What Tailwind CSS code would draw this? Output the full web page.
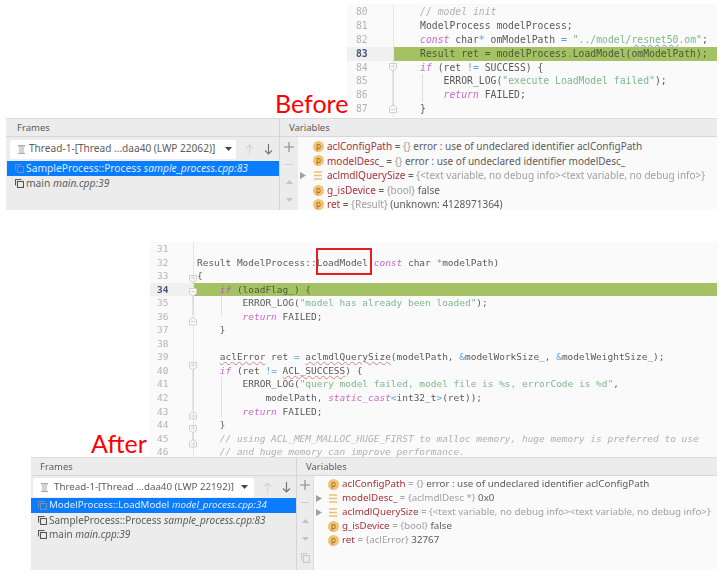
<!doctype html>
<html>
<head>
  <meta charset="UTF-8">
  <script src="https://cdn.jsdelivr.net/npm/@tailwindcss/browser@4"></script>
</head>
<body class="bg-white">
<main class="relative w-[724px] h-[577px] overflow-hidden bg-white">

  <!-- top code shot -->
  <section class="absolute left-[347px] top-[4px] w-[370px] h-[113px] bg-[#fafafa] blur-[0.45px] font-['DejaVu_Sans_Mono',monospace] [font-variant-ligatures:none] text-[9.75px] leading-[13.9px] text-[#5a5a5a]">
    <div class="absolute left-[46px] top-0 bottom-0 w-px bg-[#e6e6e6]"></div>
    <div class="absolute left-[75px] top-[70px] h-[28px] w-px bg-[#dedede]"></div>
    <div class="pt-[1px]">
      <div class="flex h-[13.9px]"><span class="w-[46px] pl-[9px] text-[#b4b4b4]">80</span><span class="whitespace-pre pl-[3.6px] italic text-[#b0b0b0]">    // model init</span></div>
      <div class="flex h-[13.9px]"><span class="w-[46px] pl-[9px] text-[#b4b4b4]">81</span><span class="whitespace-pre pl-[3.6px]">    ModelProcess modelProcess;</span></div>
      <div class="flex h-[13.9px]"><span class="w-[46px] pl-[9px] text-[#b4b4b4]">82</span><span class="whitespace-pre pl-[3.6px]">    <span class="italic text-[#c66bc9]">const</span> char<span class="text-[#5aa5e0]">*</span> omModelPath <span class="text-[#5aa5e0]">=</span> <span class="text-[#7fb88a]">"../model/<span class="underline decoration-wavy decoration-[#6f8fe0] decoration-1 underline-offset-[1px]">resnet50</span>.om"</span>;</span></div>
      <div class="flex h-[13.9px]"><span class="w-[46px] pl-[9px] bg-[#f0f0f0] font-bold text-[#44527c]">83</span><span class="flex-1 whitespace-pre pl-[3.6px] bg-[#a4c263] text-[#4f5a3a]">    Result ret = modelProcess<span class="text-[#3f8fc4]">.</span>LoadModel(omModelPath);</span></div>
      <div class="flex h-[13.9px]"><span class="w-[46px] pl-[9px] text-[#b4b4b4]">84</span><span class="whitespace-pre pl-[3.6px]">    <span class="italic text-[#c66bc9]">if</span> (ret <span class="text-[#5aa5e0]">!=</span> SUCCESS) {</span></div>
      <div class="flex h-[13.9px]"><span class="w-[46px] pl-[9px] text-[#b4b4b4]">85</span><span class="whitespace-pre pl-[3.6px]">        ERROR_LOG(<span class="text-[#7fb88a]">"execute LoadModel failed"</span>);</span></div>
      <div class="flex h-[13.9px]"><span class="w-[46px] pl-[9px] text-[#b4b4b4]">86</span><span class="whitespace-pre pl-[3.6px]">        <span class="italic text-[#c66bc9]">return</span> FAILED;</span></div>
      <div class="flex h-[13.9px]"><span class="w-[46px] pl-[9px] text-[#b4b4b4]">87</span><span class="whitespace-pre pl-[3.6px]">    }</span></div>
    </div>
    <svg class="absolute left-[42px] top-[59px]" width="8" height="50" viewBox="0 0 8 50" fill="none" stroke="#cfcfcf">
      <path d="M.5.5h7v5l-3.500 2.500-3.500-2.500zM2 3h4"/>
      <path d="M4 8v34"/>
      <path d="M.5 49.500h7v-5l-3.500-2.500-3.500 2.500zM2 46.500h4" fill="#fafafa"/>
    </svg>
  </section>

  <p class="absolute left-[275px] top-[87px] font-['Lato',sans-serif] text-[25px] leading-[32px] text-[#ff0000]">Before</p>

  <!-- before debug panel -->
  <section class="absolute left-[6px] top-[118px] w-[711px] h-[92px] flex bg-[#ececec] blur-[0.45px] font-['Noto_Sans',sans-serif] text-[10px] text-[#5c5c5c] border-t border-[#dcdcdc]">
    <div class="w-[274px] shrink-0 border-r border-[#d4d4d4]">
      <div class="h-[18px] pl-[11px] leading-[17px] text-[9.5px] border-b border-[#d8d8d8]">Frames</div>
      <div class="flex items-center h-[24px] pl-[4px]">
        <div class="w-[226px] h-[19px] flex items-center bg-white rounded-[2px] pl-[7px] pr-[4px] text-[10.1px]">
          <svg width="9" height="9" viewBox="0 0 9 9" fill="#a8a8a8"><path d="M1 0h7v1.500H1zM2 2.500h5v1H2zM2 4.500h5v1H2zM2 6.500h5v1H2zM1 8h7v1H1z"/></svg>
          <span class="ml-[3px] flex-1 whitespace-nowrap">Thread-1-[Thread ...daa40 (LWP 22062)]</span>
          <svg width="7" height="4" viewBox="0 0 7 4"><path d="M0 0h7L3.500 4z" fill="#444"/></svg>
        </div>
        <svg class="ml-[9px]" width="9" height="11" viewBox="0 0 9 11" fill="none" stroke="#d4d4d4" stroke-width="1.200"><path d="M4.500 11V1M1 4.500l3.500-3.500 3.500 3.500"/></svg>
        <svg class="ml-[10px]" width="9" height="11" viewBox="0 0 9 11" fill="none" stroke="#777" stroke-width="1.200"><path d="M4.500 0v10M1 6.500l3.500 3.500 3.500-3.500"/></svg>
      </div>
      <div class="flex items-center h-[15px] pl-[8px] ml-[1px] bg-[#0a7cff] text-[#dcebff] text-[10.25px] whitespace-nowrap">
        <svg width="9" height="9" viewBox="0 0 9 9" fill="none" stroke="#6f8fb8" stroke-width="1.100"><path d="M.5 6.500V.5h6"/><rect x="2.500" y="2.500" width="6" height="6"/></svg>
        <span class="ml-[2px]">SampleProcess::Process <i>sample_process.cpp:83</i></span>
      </div>
      <div class="flex items-center h-[15px] pl-[8px] ml-[1px] text-[10.25px] whitespace-nowrap">
        <svg width="9" height="9" viewBox="0 0 9 9" fill="none" stroke="#555" stroke-width="1.100"><path d="M.5 6.500V.5h6"/><rect x="2.500" y="2.500" width="6" height="6"/></svg>
        <span class="ml-[2px]">main <i>main.cpp:39</i></span>
      </div>
    </div>
    <div class="flex-1 min-w-0">
      <div class="h-[18px] pl-[9px] leading-[17px] text-[9.5px] border-b border-[#d8d8d8]">Variables</div>
      <div class="flex h-[73px]">
        <div class="w-[18px] shrink-0 flex flex-col items-center">
          <svg class="mt-[5px]" width="10" height="10" viewBox="0 0 10 10" stroke="#8a8a8a" stroke-width="1.100"><path d="M5 0v10M0 5h10"/></svg>
          <svg class="mt-[12px]" width="8" height="1" viewBox="0 0 8 1" stroke="#cfcfcf"><path d="M0 .5h8"/></svg>
          <svg class="mt-[15px]" width="7" height="4" viewBox="0 0 7 4"><path d="M0 4h7L3.500 0z" fill="#c4c4c4"/></svg>
          <svg class="mt-[14px]" width="7" height="4" viewBox="0 0 7 4"><path d="M0 0h7L3.500 4z" fill="#c4c4c4"/></svg>
        </div>
        <div class="flex-1 bg-[#fafafa] text-[10px] leading-[14.6px] whitespace-nowrap">
          <div class="flex items-center h-[14.6px] pl-[15px] mt-[2px]"><span class="w-[11px] h-[11px] mr-[3px] rounded-full bg-[#f5c271] text-[8px] leading-[10px] text-center text-[#8a6a30]">p</span><span class="text-[#a5343a]">aclConfigPath</span><span class="whitespace-pre"> = <span class="text-[#a0a0a0]">{}</span> error : use of undeclared identifier aclConfigPath</span></div>
          <div class="flex items-center h-[14.6px] pl-[15px]"><span class="w-[11px] h-[11px] mr-[3px] rounded-full bg-[#f5c271] text-[8px] leading-[10px] text-center text-[#8a6a30]">p</span><span class="text-[#a5343a]">modelDesc_</span><span class="whitespace-pre"> = <span class="text-[#a0a0a0]">{}</span> error : use of undeclared identifier modelDesc_</span></div>
          <div class="flex items-center h-[14.6px] pl-[2px]">
            <svg class="mr-[7px]" width="6" height="7" viewBox="0 0 6 7"><path d="M0 0v7l6-3.500z" fill="#a0a0a0"/></svg>
            <svg class="mr-[4px]" width="10" height="9" viewBox="0 0 10 9" stroke="#f0c070" stroke-width="1.300"><path d="M1 1h8M1 4.500h8M1 8h8"/></svg>
            <span class="text-[#a5343a]">aclmdlQuerySize</span><span class="whitespace-pre"> = <span class="text-[#a0a0a0]">{&lt;text variable, no debug info&gt;&lt;text variable, no debug info&gt;}</span></span>
          </div>
          <div class="flex items-center h-[14.6px] pl-[15px]"><span class="w-[11px] h-[11px] mr-[3px] rounded-full bg-[#f5c271] text-[8px] leading-[10px] text-center text-[#8a6a30]">p</span><span class="text-[#a5343a]">g_isDevice</span><span class="whitespace-pre"> = <span class="text-[#a0a0a0]">{bool}</span> false</span></div>
          <div class="flex items-center h-[14.6px] pl-[15px]"><span class="w-[11px] h-[11px] mr-[3px] rounded-full bg-[#f5c271] text-[8px] leading-[10px] text-center text-[#8a6a30]">p</span><span class="text-[#a5343a]">ret</span><span class="whitespace-pre"> = <span class="text-[#a0a0a0]">{Result}</span> (unknown: 4128971364)</span></div>
        </div>
      </div>
    </div>
  </section>

  <!-- bottom code shot -->
  <section class="absolute left-[150px] top-[242px] w-[567px] h-[215px] bg-[#fafafa] blur-[0.45px] font-['DejaVu_Sans_Mono',monospace] text-[9.47px] leading-[13.55px] text-[#5a5a5a]">
    <div class="absolute left-[43px] top-0 bottom-0 w-px bg-[#e6e6e6]"></div>
    <div class="absolute left-[71px] top-[54px] h-[20px] w-px bg-[#e2e2e2]"></div>
    <div class="absolute left-[71px] top-[135px] h-[40px] w-px bg-[#e2e2e2]"></div>
    <div>
      <div class="flex h-[13.55px]"><span class="w-[43px] pl-[7px] text-[#b4b4b4]">31</span></div>
      <div class="flex h-[13.55px]"><span class="w-[43px] pl-[7px] text-[#b4b4b4]">32</span><span class="whitespace-pre pl-[4px]">Result ModelProcess::LoadModel(<span class="italic text-[#c66bc9]">const</span> char <span class="text-[#5aa5e0]">*</span>modelPath)</span></div>
      <div class="flex h-[13.55px]"><span class="w-[43px] pl-[7px] text-[#b4b4b4]">33</span><span class="whitespace-pre pl-[4px]">{</span></div>
      <div class="flex h-[13.55px]"><span class="w-[43px] pl-[7px] bg-[#f0f0f0] font-bold text-[#44527c]">34</span><span class="flex-1 whitespace-pre pl-[4px] bg-[#a4c263] text-[#4f5a3a]">    <span class="italic text-[#a95fb0]">if</span> (loadFlag_) {</span></div>
      <div class="flex h-[13.55px]"><span class="w-[43px] pl-[7px] text-[#b4b4b4]">35</span><span class="whitespace-pre pl-[4px]">        ERROR_LOG(<span class="text-[#7fb88a]">"model has already been loaded"</span>);</span></div>
      <div class="flex h-[13.55px]"><span class="w-[43px] pl-[7px] text-[#b4b4b4]">36</span><span class="whitespace-pre pl-[4px]">        <span class="italic text-[#c66bc9]">return</span> FAILED;</span></div>
      <div class="flex h-[13.55px]"><span class="w-[43px] pl-[7px] text-[#b4b4b4]">37</span><span class="whitespace-pre pl-[4px]">    }</span></div>
      <div class="flex h-[13.55px]"><span class="w-[43px] pl-[7px] text-[#b4b4b4]">38</span></div>
      <div class="flex h-[13.55px]"><span class="w-[43px] pl-[7px] text-[#b4b4b4]">39</span><span class="whitespace-pre pl-[4px]">    <span class="underline decoration-wavy decoration-[#e08080] decoration-1 underline-offset-[1px]">aclError</span> ret <span class="text-[#5aa5e0]">=</span> <span class="underline decoration-wavy decoration-[#e08080] decoration-1 underline-offset-[1px]">aclmdlQuerySize</span>(modelPath, <span class="text-[#5aa5e0]">&amp;</span>modelWorkSize_, <span class="text-[#5aa5e0]">&amp;</span>modelWeightSize_);</span></div>
      <div class="flex h-[13.55px]"><span class="w-[43px] pl-[7px] text-[#b4b4b4]">40</span><span class="whitespace-pre pl-[4px]">    <span class="italic text-[#c66bc9]">if</span> (ret <span class="text-[#5aa5e0]">!=</span> <span class="underline decoration-wavy decoration-[#e08080] decoration-1 underline-offset-[1px]">ACL_SUCCESS</span>) {</span></div>
      <div class="flex h-[13.55px]"><span class="w-[43px] pl-[7px] text-[#b4b4b4]">41</span><span class="whitespace-pre pl-[4px]">        ERROR_LOG(<span class="text-[#7fb88a]">"query model failed, model file is %s, errorCode is %d"</span>,</span></div>
      <div class="flex h-[13.55px]"><span class="w-[43px] pl-[7px] text-[#b4b4b4]">42</span><span class="whitespace-pre pl-[4px]">            modelPath, <span class="italic text-[#c66bc9]">static_cast</span><span class="text-[#5aa5e0]">&lt;</span>int32_t<span class="text-[#5aa5e0]">&gt;</span>(ret));</span></div>
      <div class="flex h-[13.55px]"><span class="w-[43px] pl-[7px] text-[#b4b4b4]">43</span><span class="whitespace-pre pl-[4px]">        <span class="italic text-[#c66bc9]">return</span> FAILED;</span></div>
      <div class="flex h-[13.55px]"><span class="w-[43px] pl-[7px] text-[#b4b4b4]">44</span><span class="whitespace-pre pl-[4px]">    }</span></div>
      <div class="flex h-[13.55px]"><span class="w-[43px] pl-[7px] text-[#b4b4b4]">45</span><span class="whitespace-pre pl-[4px] italic text-[#b0b0b0]">    // using ACL_MEM_MALLOC_HUGE_FIRST to malloc memory, huge memory is preferred to use</span></div>
      <div class="flex h-[13.55px]"><span class="w-[43px] pl-[7px] text-[#b4b4b4]">46</span><span class="whitespace-pre pl-[4px] italic text-[#b0b0b0]">    // and huge memory can improve performance.</span></div>
    </div>
    <svg class="absolute left-[39px] top-[33px]" width="8" height="180" viewBox="0 0 8 180" fill="none" stroke="#cfcfcf">
      <path d="M.5.500h7v5l-3.500 2.500-3.500-2.500zM2 3h4"/>
      <path d="M.5 13.500h7v5l-3.500 2.500-3.500-2.500zM2 16.500h4" fill="#fafafa"/>
      <path d="M4 21v19"/>
      <path d="M.5 50h7v-5l-3.500-2.500-3.500 2.500zM2 46.500h4" fill="#fafafa"/>
      <path d="M.5 87.500h7v5l-3.500 2.500-3.500-2.500zM2 90h4"/>
      <path d="M4 95v40"/>
      <path d="M.5 144h7v-5l-3.500-2.500-3.500 2.500zM2 141h4"/>
      <path d="M.5 150.500h7v5l-3.500 2.500-3.500-2.500zM2 153h4"/>
      <path d="M4 158v7"/>
      <path d="M.5 172h7v-5l-3.500-2.500-3.500 2.500zM2 169h4"/>
    </svg>
  </section>

  <!-- overlay on the code -->
  <div class="absolute left-[316px] top-[248px] w-[56px] h-[27px] border-2 border-[#e3201f]"></div>

  <p class="absolute left-[91px] top-[427px] font-['Lato',sans-serif] text-[25px] leading-[32px] text-[#ff0000]">After</p>

  <!-- after debug panel -->
  <section class="absolute left-[31px] top-[457px] w-[686px] h-[113px] flex bg-[#ececec] blur-[0.45px] font-['Noto_Sans',sans-serif] text-[10px] text-[#5c5c5c] border-t border-[#dcdcdc]">
    <div class="w-[266px] shrink-0 border-r border-[#d4d4d4]">
      <div class="h-[18px] pl-[9px] leading-[17px] text-[9.5px] border-b border-[#d8d8d8]">Frames</div>
      <div class="flex items-center h-[22px] pl-[2px]">
        <div class="w-[221px] h-[19px] flex items-center bg-white rounded-[2px] pl-[7px] pr-[6px] text-[9.75px]">
          <svg width="9" height="9" viewBox="0 0 9 9" fill="#a8a8a8"><path d="M1 0h7v1.500H1zM2 2.500h5v1H2zM2 4.500h5v1H2zM2 6.500h5v1H2zM1 8h7v1H1z"/></svg>
          <span class="ml-[5px] flex-1 whitespace-nowrap">Thread-1-[Thread ...daa40 (LWP 22192)]</span>
          <svg width="7" height="4" viewBox="0 0 7 4"><path d="M0 0h7L3.500 4z" fill="#444"/></svg>
        </div>
        <svg class="ml-[9px]" width="9" height="11" viewBox="0 0 9 11" fill="none" stroke="#d4d4d4" stroke-width="1.200"><path d="M4.500 11V1M1 4.500l3.500-3.500 3.500 3.500"/></svg>
        <svg class="ml-[10px]" width="9" height="11" viewBox="0 0 9 11" fill="none" stroke="#777" stroke-width="1.200"><path d="M4.500 0v10M1 6.500l3.500 3.500 3.500-3.500"/></svg>
      </div>
      <div class="flex items-center h-[15px] pl-[7px] bg-[#0a7cff] text-[#dcebff] text-[9.75px] whitespace-nowrap">
        <svg width="9" height="9" viewBox="0 0 9 9" fill="none" stroke="#6f8fb8" stroke-width="1.100"><path d="M.5 6.500V.5h6"/><rect x="2.500" y="2.500" width="6" height="6"/></svg>
        <span class="ml-[2px]">ModelProcess::LoadModel <i>model_process.cpp:34</i></span>
      </div>
      <div class="flex items-center h-[14px] pl-[7px] text-[10px] whitespace-nowrap">
        <svg width="9" height="9" viewBox="0 0 9 9" fill="none" stroke="#555" stroke-width="1.100"><path d="M.5 6.500V.5h6"/><rect x="2.500" y="2.500" width="6" height="6"/></svg>
        <span class="ml-[2px]">SampleProcess::Process <i>sample_process.cpp:83</i></span>
      </div>
      <div class="flex items-center h-[14px] pl-[7px] text-[10px] whitespace-nowrap">
        <svg width="9" height="9" viewBox="0 0 9 9" fill="none" stroke="#555" stroke-width="1.100"><path d="M.5 6.500V.5h6"/><rect x="2.500" y="2.500" width="6" height="6"/></svg>
        <span class="ml-[2px]">main <i>main.cpp:39</i></span>
      </div>
    </div>
    <div class="flex-1 min-w-0">
      <div class="h-[18px] pl-[9px] leading-[17px] text-[9.5px] border-b border-[#d8d8d8]">Variables</div>
      <div class="flex h-[94px]">
        <div class="w-[17px] shrink-0 flex flex-col items-center border-r border-[#dcdcdc]">
          <svg class="mt-[4px]" width="10" height="10" viewBox="0 0 10 10" stroke="#8a8a8a" stroke-width="1.100"><path d="M5 0v10M0 5h10"/></svg>
          <svg class="mt-[12px]" width="8" height="1" viewBox="0 0 8 1" stroke="#cfcfcf"><path d="M0 .5h8"/></svg>
          <svg class="mt-[16px]" width="7" height="4" viewBox="0 0 7 4"><path d="M0 4h7L3.500 0z" fill="#c4c4c4"/></svg>
          <svg class="mt-[14px]" width="7" height="4" viewBox="0 0 7 4"><path d="M0 0h7L3.500 4z" fill="#c4c4c4"/></svg>
          <svg class="mt-[12px]" width="9" height="10" viewBox="0 0 9 10" fill="none" stroke="#c8c8c8" stroke-width="1.100"><path d="M.5 7.500V.5h6"/><rect x="2.500" y="2.500" width="6" height="7"/></svg>
        </div>
        <div class="flex-1 bg-[#fafafa] text-[9.75px] leading-[14px] whitespace-nowrap">
          <div class="flex items-center h-[14px] pl-[14px] mt-[1px]"><span class="w-[11px] h-[11px] mr-[3px] rounded-full bg-[#f5c271] text-[8px] leading-[10px] text-center text-[#8a6a30]">p</span><span class="text-[#a5343a]">aclConfigPath</span><span class="whitespace-pre"> = <span class="text-[#a0a0a0]">{}</span> error : use of undeclared identifier aclConfigPath</span></div>
          <div class="flex items-center h-[14px] pl-[2px]">
            <svg class="mr-[6px]" width="6" height="7" viewBox="0 0 6 7"><path d="M0 0v7l6-3.500z" fill="#a0a0a0"/></svg>
            <svg class="mr-[4px]" width="10" height="9" viewBox="0 0 10 9" stroke="#f0c070" stroke-width="1.300"><path d="M1 1h8M1 4.500h8M1 8h8"/></svg>
            <span class="text-[#a5343a]">modelDesc_</span><span class="whitespace-pre"> = <span class="text-[#a0a0a0]">{aclmdlDesc *}</span> 0x0</span>
          </div>
          <div class="flex items-center h-[14px] pl-[2px]">
            <svg class="mr-[6px]" width="6" height="7" viewBox="0 0 6 7"><path d="M0 0v7l6-3.500z" fill="#a0a0a0"/></svg>
            <svg class="mr-[4px]" width="10" height="9" viewBox="0 0 10 9" stroke="#f0c070" stroke-width="1.300"><path d="M1 1h8M1 4.500h8M1 8h8"/></svg>
            <span class="text-[#a5343a]">aclmdlQuerySize</span><span class="whitespace-pre"> = <span class="text-[#a0a0a0]">{&lt;text variable, no debug info&gt;&lt;text variable, no debug info&gt;}</span></span>
          </div>
          <div class="flex items-center h-[14px] pl-[14px]"><span class="w-[11px] h-[11px] mr-[3px] rounded-full bg-[#f5c271] text-[8px] leading-[10px] text-center text-[#8a6a30]">p</span><span class="text-[#a5343a]">g_isDevice</span><span class="whitespace-pre"> = <span class="text-[#a0a0a0]">{bool}</span> false</span></div>
          <div class="flex items-center h-[14px] pl-[14px]"><span class="w-[11px] h-[11px] mr-[3px] rounded-full bg-[#f5c271] text-[8px] leading-[10px] text-center text-[#8a6a30]">p</span><span class="text-[#a5343a]">ret</span><span class="whitespace-pre"> = <span class="text-[#a0a0a0]">{aclError}</span> 32767</span></div>
        </div>
      </div>
    </div>
  </section>
</main>
</body>
</html>
